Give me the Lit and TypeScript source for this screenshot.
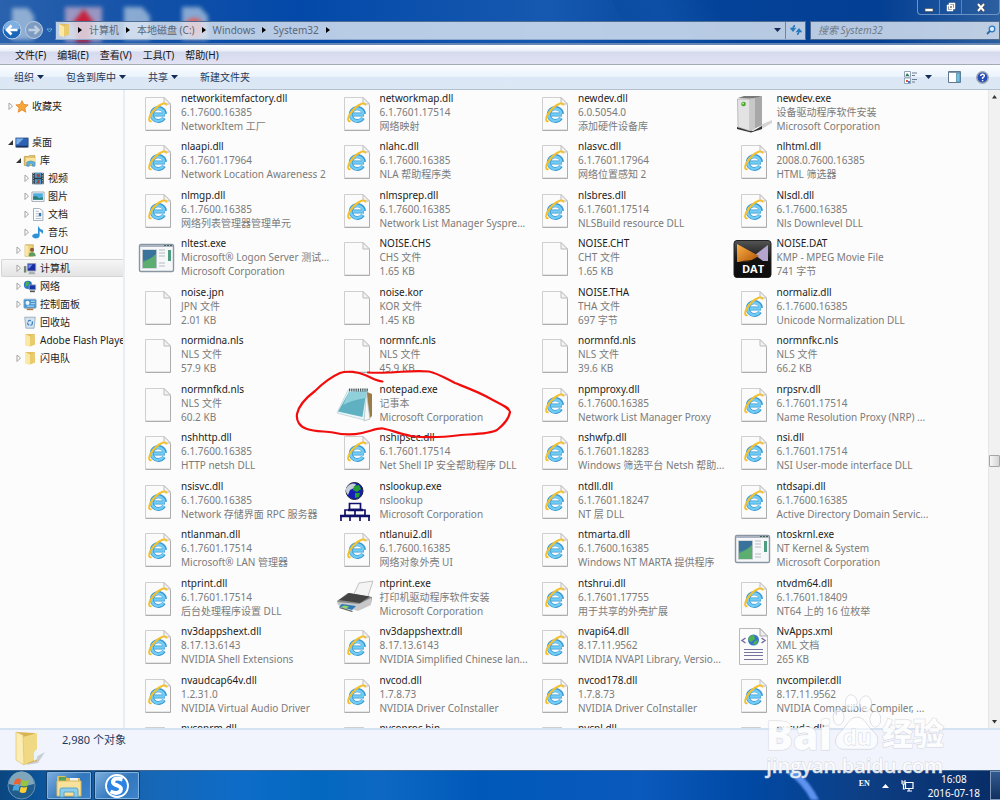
import { LitElement, html, svg, css, nothing } from "lit";
import { customElement, property } from "lit/decorators.js";

const e = (a: string, b: string, c: string, kind = "dll") => ({ a, b, c, kind });
const MS = "Microsoft Corporation";
const R = "6.1.7600.16385";
const S = "6.1.7601.17514";

const FILES = [
  e("networkitemfactory.dll", R, "NetworkItem 工厂"),
  e("networkmap.dll", S, "网络映射"),
  e("newdev.dll", "6.0.5054.0", "添加硬件设备库"),
  e("newdev.exe", "设备驱动程序软件安装", MS, "tower"),
  e("nlaapi.dll", "6.1.7601.17964", "Network Location Awareness 2"),
  e("nlahc.dll", R, "NLA 帮助程序类"),
  e("nlasvc.dll", "6.1.7601.17964", "网络位置感知 2"),
  e("nlhtml.dll", "2008.0.7600.16385", "HTML 筛选器"),
  e("nlmgp.dll", R, "网络列表管理器管理单元"),
  e("nlmsprep.dll", R, "Network List Manager Syspre..."),
  e("nlsbres.dll", S, "NLSBuild resource DLL"),
  e("Nlsdl.dll", R, "Nls Downlevel DLL"),
  e("nltest.exe", "Microsoft® Logon Server 测试...", MS, "app"),
  e("NOISE.CHS", "CHS 文件", "1.65 KB", "page"),
  e("NOISE.CHT", "CHT 文件", "1.65 KB", "page"),
  e("NOISE.DAT", "KMP - MPEG Movie File", "741 字节", "dat"),
  e("noise.jpn", "JPN 文件", "2.01 KB", "page"),
  e("noise.kor", "KOR 文件", "1.45 KB", "page"),
  e("NOISE.THA", "THA 文件", "697 字节", "page"),
  e("normaliz.dll", R, "Unicode Normalization DLL"),
  e("normidna.nls", "NLS 文件", "57.9 KB", "page"),
  e("normnfc.nls", "NLS 文件", "45.9 KB", "page"),
  e("normnfd.nls", "NLS 文件", "39.6 KB", "page"),
  e("normnfkc.nls", "NLS 文件", "66.2 KB", "page"),
  e("normnfkd.nls", "NLS 文件", "60.2 KB", "page"),
  e("notepad.exe", "记事本", MS, "notepad"),
  e("npmproxy.dll", R, "Network List Manager Proxy"),
  e("nrpsrv.dll", S, "Name Resolution Proxy (NRP) ..."),
  e("nshhttp.dll", R, "HTTP netsh DLL"),
  e("nshipsec.dll", S, "Net Shell IP 安全帮助程序 DLL"),
  e("nshwfp.dll", "6.1.7601.18283", "Windows 筛选平台 Netsh 帮助..."),
  e("nsi.dll", S, "NSI User-mode interface DLL"),
  e("nsisvc.dll", R, "Network 存储界面 RPC 服务器"),
  e("nslookup.exe", "nslookup", MS, "lookup"),
  e("ntdll.dll", "6.1.7601.18247", "NT 层 DLL"),
  e("ntdsapi.dll", R, "Active Directory Domain Servic..."),
  e("ntlanman.dll", S, "Microsoft® LAN 管理器"),
  e("ntlanui2.dll", R, "网络对象外壳 UI"),
  e("ntmarta.dll", R, "Windows NT MARTA 提供程序"),
  e("ntoskrnl.exe", "NT Kernel & System", MS, "app"),
  e("ntprint.dll", S, "后台处理程序设置 DLL"),
  e("ntprint.exe", "打印机驱动程序软件安装", MS, "printer"),
  e("ntshrui.dll", "6.1.7601.17755", "用于共享的外壳扩展"),
  e("ntvdm64.dll", "6.1.7601.18409", "NT64 上的 16 位枚举"),
  e("nv3dappshext.dll", "8.17.13.6143", "NVIDIA Shell Extensions"),
  e("nv3dappshextr.dll", "8.17.13.6143", "NVIDIA Simplified Chinese lan..."),
  e("nvapi64.dll", "8.17.11.9562", "NVIDIA NVAPI Library, Versio..."),
  e("NvApps.xml", "XML 文档", "265 KB", "xml"),
  e("nvaudcap64v.dll", "1.2.31.0", "NVIDIA Virtual Audio Driver"),
  e("nvcod.dll", "1.7.8.73", "NVIDIA Driver CoInstaller"),
  e("nvcod178.dll", "1.7.8.73", "NVIDIA Driver CoInstaller"),
  e("nvcompiler.dll", "8.17.11.9562", "NVIDIA Compatible Compiler, ..."),
  e("nvcoprm.dll", "", ""),
  e("nvcoproc.bin", "", "", "page"),
  e("nvcpl.dll", "", ""),
  e("nvcuda.dll", "", ""),
];

const page = svg`
  <path d="M8.500 3.500H27L33.500 10V36H8.500Z" fill="#fbfbfb" stroke="#cfcfcf"/>
  <path d="M8.500 36.500H33.500V11" fill="none" stroke="#adadad"/>
  <path d="M27 3.500V10H33.500Z" fill="#f2f2f2" stroke="#bcbcbc"/>`;

const ART: Record<string, unknown> = {
  page,
  dll: svg`${page}
    <path d="M28 20.500H17M27 24A6.600 6.400 0 1 1 28 20" fill="none" stroke="#3b97d2" stroke-width="4"/>
    <path d="M27.600 20.500H17M26.400 24A6.300 6.200 0 1 1 27.300 20" fill="none" stroke="#72cdf5" stroke-width="2.400"/>
    <path d="M14.500 27C10.500 28.500 11.500 22 17.500 15.500C23 9.500 29.500 7.500 29.500 11.500" fill="none" stroke="#f4c02c" stroke-width="1.900"/>`,
  tower: svg`<path d="M27 31L39 26V29L25 37Z" fill="#d5d5d5"/>
    <path d="M4 33L20 37L29 32V35L18 38.500L4 35Z" fill="#333"/>
    <path d="M5 4L11 2H29L24 5Z" fill="#777"/>
    <path d="M4.500 5H17V37L5 33Z" fill="#e3e3e3" stroke="#999" stroke-width=".6"/>
    <path d="M17 5L29 2V31L17 37Z" fill="#a8a8a8"/>
    <path d="M17 5L22 4V35L17 37Z" fill="#c8c8c8"/>
    <circle cx="10.500" cy="10" r="2.300" fill="#4aa52c"/><circle cx="10" cy="9.500" r=".9" fill="#bff29c"/>`,
  app: svg`<rect x="2.500" y="5.500" width="34" height="27" rx="1.500" fill="#f6f7f9" stroke="#8b96a5" stroke-width="1.400"/>
    <path d="M3 6H36V8H3Z" fill="#aab4c2"/><path d="M27 6.500H35" stroke="#465" stroke-dasharray="2 1"/>
    <rect x="5.500" y="11" width="14" height="18" fill="#438a90" stroke="#b5bfc6"/>
    <path d="M6 29V23Q13 21 19 14V29Z" fill="#5cae70"/><path d="M6 11H19V15Q13 21 6 21Z" fill="#39739b"/>
    <path d="M22 11H28M22 14H28M22 17H28M22 24H28M22 27H28" stroke="#ccd0d4" stroke-width="1.500"/>
    <path d="M31 11H34V22H31Z" fill="#4f9c80"/>`,
  dat: svg`<defs><linearGradient id="k" x1="0" y1="0" x2="0" y2="1"><stop offset="0" stop-color="#555"/><stop offset=".5" stop-color="#161616"/><stop offset="1" stop-color="#000"/></linearGradient>
    <linearGradient id="o" x1="0" y1="0" x2="1" y2="1"><stop offset="0" stop-color="#ffb347"/><stop offset="1" stop-color="#ad5208"/></linearGradient></defs>
    <rect x="1" y="1.500" width="37" height="37" rx="3" fill="url(#k)" stroke="#222"/>
    <path d="M35 6V22H30L22 16Z" fill="#b4a5cc"/><path d="M4 5L26 17L15 23H4Z" fill="url(#o)"/>
    <path d="M1.500 24Q20 18 37.500 24V36Q37.500 38 35.500 38H3.500Q1.500 38 1.500 36Z" fill="#111" opacity=".75"/>
    <text x="20" y="34" text-anchor="middle" font-family="Open Sans" font-weight="700" font-size="11" fill="#fff">DAT</text>`,
  notepad: svg`<path d="M31 7L36 9V31L32 35Z" fill="#9b7a45"/>
    <path d="M30 5L34 34L28 36Z" fill="#f6f6f6" stroke="#aebbc0" stroke-width=".7"/>
    <path d="M12 5L31 4L28 35L1 28Z" fill="#eaf6f9" stroke="#a8c4ca" stroke-width=".6"/>
    <path d="M13 7L30.500 6L26.500 32L2 26.500Z" fill="#5fb1c2"/><path d="M13 7L30.500 6L29.500 13Q16 15 7 20Z" fill="#8fd0da"/>
    <path d="M13 5H32" stroke="#4d5b5e" stroke-width="3" stroke-dasharray="1.200 1"/>`,
  lookup: svg`<circle cx="18.500" cy="9" r="8.500" fill="#1420b4" stroke="#223"/>
    <path d="M11 5Q15 0 20 2L18 6L14 8L12 13Q8 8 11 5Z" fill="#c7d0d8"/>
    <path d="M18 4L23 3L25 7L21 10L17 8Z M19 11L24 11L23 15L19 16Z" fill="#249d32"/>
    <path d="M13.500 21.500H24.500V27.500H13.500ZM9 28H29V33.500H9ZM19 28V33.500M5 34H34M5 33V39M14 33V39M24 33V39M33 33V39" fill="none" stroke="#10106a" stroke-width="1.700"/>
    <path d="M12 28H27M4 34H34" stroke="#10106a" stroke-width="2.400"/>`,
  printer: svg`<path d="M17 17L23 4L37 2L31 20Z" fill="#f4f4f4" stroke="#aaa" stroke-width=".7"/>
    <path d="M1 22L12 14L36 18L35 25L23 31L3 26Z" fill="#888"/>
    <path d="M3 21L13 14L34 17.500L24 24Z" fill="#444"/><path d="M1 23L23 25L35 19V26L22 32L2 26Z" fill="#c8c8c8"/>
    <path d="M6 25L20 27L16 31L3 27.500Z" fill="#2e79b7"/><path d="M8 26.500L13 27.500L10 30L5 28Z" fill="#90d467"/>
    <path d="M4 28L17 32L16 33L3 29Z" fill="#666"/>`,
  xml: svg`<path d="M6.500 1.500H27L34.500 9V37.500H6.500Z" fill="#fbfbfb" stroke="#b9b9b9"/><path d="M27 1.500V9H34.500Z" fill="#eee" stroke="#aaa"/>
    <path d="M12.500 11L9 13.500L12.500 16M28.500 11L32 13.500L28.500 16" fill="none" stroke="#77709c" stroke-width="1.500"/>
    <circle cx="20.500" cy="13" r="5.500" fill="#3575c8"/><path d="M17 9L21 8L22 12L18 15L15 13ZM22 14L25 13L23 18L20 17Z" fill="#4fb24d"/>
    <path d="M11 22.500H30M11 25.500H30M11 28.500H30M11 32.500H30" stroke="#77739f" stroke-width="1.200"/>`,
};

const TREE_ART: Record<string, unknown> = {
  star: svg`<path d="M8 .800L10.200 5.500L15.500 6L11.500 9.700L12.700 15L8 12.200L3.300 15L4.500 9.700L.5 6L5.800 5.500Z" fill="#f6a73c" stroke="#e3862a"/>`,
  desk: svg`<rect x=".5" y="2.500" width="15" height="11" fill="#2d63b4" stroke="#27477d"/><path d="M1 3H10L3 10H1Z" fill="#79aee8"/><path d="M1 13H15" stroke="#1a2f59" stroke-width="2"/>`,
  lib: svg`<path d="M1 3H6L7 2H14V14H1Z" fill="#e5c76b" stroke="#bf9c45"/><path d="M3 5H15V13H3Z" fill="#f8e5a0"/><path d="M4 15V10Q9 7 14 10V15H11V12H7V15Z" fill="#62b3de" stroke="#3b87b7" stroke-width=".7"/>`,
  video: svg`<path d="M1 1H15V15H1Z" fill="#2d3944"/><path d="M4 1H12V7H4ZM4 9H12V15H4Z" fill="#4a9bc9"/><path d="M6 3L10 2L11 6H7Z M7 10H10V14H6Z" fill="#a64938"/><path d="M2.500 1V15M13.500 1V15" stroke="#b9c6ce" stroke-dasharray="1.500 1.500"/>`,
  pic: svg`<path d="M.5 2.500H15.500V14H.5Z" fill="#fff" stroke="#8c99a6"/><path d="M2 4H14V12H2Z" fill="#4eaee0"/><path d="M2 12V8Q6 6 9 10L14 9V12Z" fill="#2c7d74"/>`,
  doc: svg`<path d="M2.500.500H10L14 4V15.500H2.500Z" fill="#fff" stroke="#8a9bab"/><path d="M5 4H9M5 7H9M5 10H12M5 13H12" stroke="#9ab"/><path d="M9 6H12V10H9Z" fill="#3679b6"/>`,
  music: svg`<path d="M8 0Q10 4 14 5Q15.500 8 13 10Q13 7 10 6.500V12.500Q9 15.500 5 15.500Q0 14.500 1 11.500Q3 8.500 8 9.500Z" fill="#2e91d8"/>`,
  user: svg`<path d="M2 1H12V15H2Z" fill="#edd27a" stroke="#c9a854"/><path d="M2 1L6 3V16L2 14Z" fill="#f8e8a8"/><circle cx="10.500" cy="7" r="2.500" fill="#8b5a3b"/><path d="M6.500 15Q6 10 10.500 10Q15 10 15 15Z" fill="#5f9c64"/>`,
  pc: svg`<path d="M5 2H15V11H5Z" fill="#1a2ea3" stroke="#8c96a2"/><path d="M6 3H11L7 8H6Z" fill="#708dea"/><path d="M7 12H13L15 15H6Z" fill="#a8b0b7"/><path d="M.5 5H3.500V13H.5Z" fill="#738577"/>`,
  net: svg`<circle cx="5.500" cy="6" r="5" fill="#2676c8"/><path d="M3 2L7 2L6 6L2 9Z" fill="#4db04e"/><path d="M7 6H15V12H7Z" fill="#1835a5" stroke="#9eabb8"/><path d="M8 14H14" stroke="#555" stroke-width="2"/>`,
  panel: svg`<rect x=".5" y="1.500" width="15" height="11" rx="1" fill="#4794cf" stroke="#89adc8"/><circle cx="5" cy="6" r="2.500" fill="#e8f3fa"/><path d="M9 4H14M9 7H14M4 10H13" stroke="#d9effb"/><path d="M4 14H12" stroke="#b5793d" stroke-width="2"/>`,
  bin: svg`<path d="M1.500 1.500H14.500L13 15H3Z" fill="#d6e4ef" stroke="#8ea5b8"/><circle cx="8" cy="8.500" r="3" fill="none" stroke="#4384c5" stroke-width="1.600" stroke-dasharray="4 1.500"/>`,
  folder: svg`<path d="M2 0H13L14 13L8 15Z" fill="#e3bf5e"/><path d="M2 0L8 3V16L2 14Z" fill="#f9e9a4"/><path d="M8 3L13 0H14V13L8 15Z" fill="#e9ca6c"/>`,
};

const TREE: [number, string, string, string][] = [
  [0, "closed", "star", "收藏夹"],
  [0, "", "", ""],
  [0, "open", "desk", "桌面"],
  [1, "open", "lib", "库"],
  [2, "closed", "video", "视频"],
  [2, "closed", "pic", "图片"],
  [2, "closed", "doc", "文档"],
  [2, "closed", "music", "音乐"],
  [1, "closed", "user", "ZHOU"],
  [1, "closed", "pc", "计算机"],
  [1, "closed", "net", "网络"],
  [1, "closed", "panel", "控制面板"],
  [1, "", "bin", "回收站"],
  [1, "", "folder", "Adobe Flash Player"],
  [1, "closed", "folder", "闪电队"],
];

const base = css`
  * { box-sizing: border-box; }
  button, input, a { font: inherit; color: inherit; margin: 0; padding: 0; border: 0; background: none; text-decoration: none; outline: none; white-space: nowrap; }
  svg { display: block; flex: none; }
`;

@customElement("file-tile")
class FileTile extends LitElement {
  @property({ attribute: false }) file = FILES[0];
  static styles = [base, css`
    :host { display: block; position: relative; min-width: 0; }
    .tile { display: flex; gap: 4px; padding-left: 3px; }
    .art { margin-top: 3px; }
    .text { min-width: 0; line-height: 14px; color: #7b7b7b; white-space: nowrap; }
    .name { color: #1c1c1c; }
    .loop { position: absolute; left: -38px; top: -13px; pointer-events: none; z-index: 2; }
  `];
  render() {
    const f = this.file;
    return html`<div class="tile">
      <svg class="art" width="40" height="40" viewBox="0 0 40 40">${ART[f.kind]}</svg>
      <div class="text"><div class="name">${f.a}</div><div>${f.b}</div><div>${f.c}</div></div>
    </div>
    ${f.kind === "notepad" ? html`<svg class="loop" width="218" height="70" viewBox="0 0 218 70">
      <path d="M87.500 12.500C82 12.500 77 9 70 6C63 3 52 1.500 45 4C36 8 28 14 20 22C12 28 4 35 2 45C1 52 5 58 12 60C20 63 30 62 38 63.500C48 66 58 66 67 64C76 62 82 59 88 59.500C96 61 105 65 116 67C130 69 150 68 166 66C180 65 195 65 202 61C207 57 214 50 215 43C214 38 205 35 196 30C184 23 170 18 160 14C150 9 142 4 134 2.500C120 1 108 3 94 3.500Q82 4 73 3.500" fill="none" stroke="#f20d0d" stroke-width="2.200" stroke-linecap="round"/>
    </svg>` : nothing}`;
  }
}

@customElement("nav-tree")
class NavTree extends LitElement {
  static styles = [base, css`
    :host { display: block; padding-top: 7px; overflow: hidden; }
    .row { display: flex; align-items: center; height: 18px; color: #1c1c1c; border: 1px solid transparent; border-right: 0; margin-left: 1px; padding-left: 5px; border-radius: 2px 0 0 2px; }
    .l1 { padding-left: 13px; }
    .l2 { padding-left: 21px; }
    .on { background: linear-gradient(#f6f6f6, #e4e4e4); border-color: #d6d6d6; }
    .icon { margin: 0 3px 0 0; }
  `];
  render() {
    return html`${TREE.map(([level, state, art, label]) => label ? html`
      <a href="#" class="row l${level} ${label === "计算机" ? "on" : ""}">
        <svg width="8" height="10" viewBox="0 0 8 10">${state === "closed"
          ? svg`<path d="M2 2L5.500 5L2 8.500Z" fill="#fff" stroke="#a2a2a2"/>`
          : state === "open" ? svg`<path d="M1 8H6V3Z" fill="#333"/>` : nothing}</svg>
        <svg class="icon" width="14" height="13" viewBox="0 0 16 16">${TREE_ART[art]}</svg>
        <span>${label}</span>
      </a>` : html`<div class="row"></div>`)}`;
  }
}

@customElement("app-root")
class AppRoot extends LitElement {
  static styles = [base, css`
    :host { display: flex; flex-direction: column; height: 100vh; overflow: hidden; position: relative; font: 10px/14px "Noto Sans", "Noto Sans CJK SC", sans-serif; background: #fcfcfc; }
    .glass { display: flex; flex-direction: column; height: 45px; flex: none; border-bottom: 2px solid #6786b3;
      background: linear-gradient(62deg, transparent 62%, #0b4da3 62%, #0d4fa6 66%, transparent 72%), linear-gradient(90deg, #2a62ad 0, #1150a8 16%, #0349a9 30%, #1659b0 55%, #04439a 70%, #033f93 88%, #2c5f9f 100%); position: relative; }
    .blurs { position: absolute; left: 0; top: 4px; filter: blur(2px); }
    .wins { display: flex; align-self: flex-end; height: 15px; flex: none; border: 1px solid #6f93c3; border-top: 0; border-radius: 0 0 4px 4px; position: relative; }
    .wins button { width: 22px; display: grid; place-items: center; border-right: 1px solid #5d83b8; }
    .wins button:last-child { width: 37px; border: 0; }
    .bar { display: flex; align-items: center; height: 20px; margin-top: 5px; position: relative; }
    .hist { display: flex; align-items: center; width: 55px; padding-left: 2px; gap: 2px; flex: none; }
    .addr { display: flex; align-items: center; flex: 1; height: 19px; background: rgba(220,230,242,.83); border: 1px solid #4f6c93; border-bottom-color: #8ea9cb; color: #5b6675; padding-left: 1px; }
    .crumb { display: flex; align-items: center; }
    .crumb svg { margin: 0 7px; }
    .grow { flex: 1; }
    .drop { width: 16px; display: grid; place-items: center; align-self: stretch; }
    .fresh { width: 20px; display: grid; place-items: center; align-self: stretch; border-left: 1px solid #6c84a6; }
    .find { display: flex; align-items: center; width: 190px; height: 19px; margin-left: 4px; background: rgba(220,230,242,.83); border: 1px solid #4f6c93; padding: 0 3px 0 7px; }
    .find input { flex: 1; min-width: 0; font-style: italic; }
    .find input::placeholder { color: #717b88; opacity: 1; }
    .menu { display: flex; align-items: center; gap: 11px; height: 20px; flex: none; padding-left: 15px; color: #151515; background: linear-gradient(#fff, #eceff8 32%, #d5daed 36%, #e1e2f3); border-bottom: 1px solid #a3a9b5; }
    .tools { display: flex; align-items: center; height: 25px; flex: none; padding: 0 11px 0 14px; color: #1e395b; background: linear-gradient(#fbfdff, #eaf3fc 48%, #dbe7f4 52%, #dde8f5); border-bottom: 1px solid #b2bfd1; }
    .tools button { display: flex; align-items: center; gap: 3px; margin-right: 22px; }
    .tools .view { margin-right: 16px; gap: 8px; }
    .tools .pane { margin-right: 15px; }
    .tools .help { margin-right: 0; }
    .main { display: flex; flex: 1; min-height: 0; }
    .side { width: 125px; flex: none; border-right: 2px solid #e6eef8; }
    .list { flex: 1; min-width: 0; overflow: hidden; display: grid; grid-template-columns: repeat(4, minmax(0, 1fr)); grid-auto-rows: 48px 49px; padding: 1px 60px 0 9px; }
    .scroll { width: 12px; flex: none; display: flex; flex-direction: column; align-items: center; background: #f1f1f1; border-left: 1px solid #e6e6e6; padding: 5px 0 4px; }
    .above { flex: 59; }
    .below { flex: 42; }
    .thumb { width: 11px; height: 12px; flex: none; border: 1px solid #a5a5a5; border-radius: 1px; background: linear-gradient(90deg, #f6f6f6, #d4d4d4); }
    .info { display: flex; height: 42px; flex: none; background: #f1f4fc; border-top: 2px solid #d5e2f1; color: #1e395b; padding: 0 0 0 14px; gap: 16px; }
    .count { padding-top: 2px; line-height: 16px; font-size: 11px; }
    .task { display: flex; height: 30px; flex: none; border-top: 1px solid #44678e; background: linear-gradient(90deg, #0a4680 0, #0b5499 4%, #1767b6 15%, #0d6cc8 24%, #0368c0 32%, #0d68c4 38%, #0059b8 48%, #0a59bc 64%, #0049a4 75%, #0d3f85 86%, #082c66 100%); color: #fff; position: relative; }
    .arc { position: absolute; left: 77%; top: 0; filter: blur(1px); }
    .start { width: 46px; display: grid; place-items: center; padding-right: 4px; }
    .app { width: 46px; margin-right: 2px; display: grid; place-items: center; border: 1px solid #123e6c; box-shadow: inset 0 0 0 1px #7eb3e4; background: linear-gradient(135deg, #7fb0de, #3377bd 55%, #3d85cb); border-radius: 2px; }
    .tray { display: flex; align-items: center; position: relative; }
    .lang { font: 700 8px/10px "Liberation Serif", serif; margin: 0 12px 4px 0; }
    .up { margin-right: 12px; }
    .clock { text-align: center; margin: 0 10px 0 14px; }
    .peek { width: 10px; align-self: stretch; border: 1px solid #7f97b9; border-right: 0; background: linear-gradient(#335a90, #10305f); }
    .mark { position: absolute; right: 56px; bottom: 22px; color: rgba(255,255,255,.85); -webkit-text-stroke: 1px rgba(190,194,202,.6); paint-order: stroke fill; display: flex; flex-direction: column; align-items: center; pointer-events: none; font-family: "Open Sans", "Noto Sans CJK SC", sans-serif; font-weight: 700; }
    .brand { display: flex; align-items: flex-end; font-size: 41px; line-height: 40px; font-weight: 800; }
    .paw { position: relative; width: 50px; height: 60px; }
    .du { position: absolute; left: 11px; bottom: 6px; font-size: 22px; line-height: 24px; font-weight: 700; }
    .cn { font-size: 31px; line-height: 42px; }
    .site { font-size: 20px; line-height: 24px; font-weight: 600; }
  `];
  render() {
    const right = html`<svg width="4" height="8" viewBox="0 0 4 8"><path d="M0 1L4 4L0 7Z" fill="#000"/></svg>`;
    const down = html`<svg width="7" height="4" viewBox="0 0 7 4"><path d="M0 0H7L3.500 4Z" fill="#142c55"/></svg>`;
    return html`
      <header class="glass">
        <svg class="blurs" width="220" height="38" viewBox="0 0 220 38"><path d="M12 4H28L34 12V36H12ZM124 3H142L150 12V36H124ZM182 3H200L208 12V36H182Z" fill="#c8d9e8" opacity=".65"/><path d="M65 3H102V38H65Z" fill="#b9a6c8" opacity=".8"/><path d="M84 5L96 22H90V38H76V22H70Z" fill="#c8203a"/><circle cx="194" cy="24" r="10" fill="#e55c58"/></svg>
        <div class="wins">
          <button aria-label="最小化"><svg width="10" height="9" viewBox="0 0 10 9"><path d="M1 5.500H9V8.500H1Z" fill="#fff" stroke="#555" stroke-width=".7"/></svg></button>
          <button aria-label="还原"><svg width="10" height="10" viewBox="0 0 10 10"><path d="M3.500 1.500H8.500V6.500H3.500ZM1.500 3.500H6.500V8.500H1.500Z" fill="#555" stroke="#fff" stroke-width="1.400"/></svg></button>
          <button aria-label="关闭"><svg width="10" height="9" viewBox="0 0 10 9"><path d="M2 1L8 8M8 1L2 8" stroke="#444" stroke-width="3.200"/><path d="M2 1L8 8M8 1L2 8" stroke="#fff" stroke-width="2"/></svg></button>
        </div>
        <div class="bar">
          <div class="hist">
            <button aria-label="后退"><svg width="20" height="20" viewBox="0 0 20 20"><circle cx="10" cy="10" r="9" fill="#1c66ba" stroke="#c4d9ee"/><path d="M2 9A8 8 0 0 1 18 9Q10 11 2 9Z" fill="#7db0e1"/><path d="M15.500 10H6M9.500 5.500L5 10L9.500 14.500" fill="none" stroke="#fff" stroke-width="2.600"/></svg></button>
            <button aria-label="前进"><svg width="20" height="20" viewBox="0 0 20 20"><circle cx="10" cy="10" r="8.500" fill="#7e9cc2" stroke="#b9cce2"/><path d="M4.500 10H14M10.500 6L14.500 10L10.500 14" fill="none" stroke="#c0d0e2" stroke-width="2.400"/></svg></button>
            <svg width="7" height="5" viewBox="0 0 7 5"><path d="M1 1H6L3.500 4Z" fill="#1c4d92" stroke="#6fc1ef" stroke-width=".8"/></svg>
          </div>
          <nav class="addr">
            <svg width="14" height="13" viewBox="0 0 16 16">${TREE_ART.folder}</svg>
            ${["计算机", "本地磁盘 (C:)", "Windows", "System32"].map((t) => html`<span class="crumb">${right}<a href="#">${t}</a></span>`)}
            <span class="crumb">${right}</span>
            <span class="grow"></span>
            <button class="drop" aria-label="历史">${down}</button>
            <button class="fresh" aria-label="刷新"><svg width="12" height="12" viewBox="0 0 12 12"><path d="M5 1.500Q3 2 3 5M1 4.500H5L3 7ZM7 10.500Q9 10 9 7M7 7.500H11L9 5Z" fill="#2979bd" stroke="#2979bd" stroke-width="1.300"/></svg></button>
          </nav>
          <label class="find"><input type="search" aria-label="搜索" placeholder="搜索 System32"><svg width="10" height="10" viewBox="0 0 10 10"><circle cx="6" cy="4" r="2.800" fill="#dcecf8" stroke="#2c79c0" stroke-width="1.300"/><path d="M4 6L1 9" stroke="#2c66a8" stroke-width="1.800"/></svg></label>
        </div>
      </header>
      <nav class="menu">${["文件(F)", "编辑(E)", "查看(V)", "工具(T)", "帮助(H)"].map((t) => html`<button>${t}</button>`)}</nav>
      <div class="tools">
        <button>组织 ${down}</button><button>包含到库中 ${down}</button><button>共享 ${down}</button><button>新建文件夹</button>
        <span class="grow"></span>
        <button class="view" aria-label="更改视图"><svg width="13" height="13" viewBox="0 0 13 13"><path d="M.5.500H6.500V6H.5ZM.5 7H6.500V12.500H.5Z" fill="#fff" stroke="#92a3b4"/><path d="M1.500 5L3 2L5.500 5Z" fill="#287a58"/><path d="M2 9H4V11H2Z" fill="#e35133"/><path d="M4 10H6V12H4Z" fill="#3e78d2"/><path d="M8 2H13M8 4.500H11M8 8.500H13M8 11H11" stroke="#6c7d90"/></svg>${down}</button>
        <button class="pane" aria-label="预览窗格"><svg width="13" height="12" viewBox="0 0 13 12"><path d="M.5.500H12.500V11.500H.5Z" fill="#fff" stroke="#61788f"/><path d="M1 1.500H12" stroke="#8698aa"/><path d="M8.500 2H12V11H8.500Z" fill="#73bfdc" stroke="#518ead" stroke-width=".8"/></svg></button>
        <button class="help" aria-label="帮助"><svg width="13" height="13" viewBox="0 0 13 13"><circle cx="6.500" cy="6.500" r="5.700" fill="#274db8" stroke="#9fa7b4" stroke-width="1.500"/><path d="M4.700 5Q4.700 3.200 6.500 3.200Q8.500 3.200 8.300 5Q8.200 6 6.600 6.700V8M6.600 9V10.300" fill="none" stroke="#fff" stroke-width="1.400"/></svg></button>
      </div>
      <main class="main">
        <nav-tree class="side"></nav-tree>
        <section class="list">${FILES.map((f) => html`<file-tile .file=${f}></file-tile>`)}</section>
        <div class="scroll">
          <svg width="5" height="4" viewBox="0 0 5 4"><path d="M0 3.500L2.500 0L5 3.500Z" fill="#333"/></svg>
          <span class="above"></span><span class="thumb"></span><span class="below"></span>
          <svg width="5" height="4" viewBox="0 0 5 4"><path d="M0 0L2.500 3.500L5 0Z" fill="#333"/></svg>
        </div>
      </main>
      <footer class="info">
        <svg width="32" height="38" viewBox="0 0 32 38"><path d="M20 28L31 22L24 33L12 35Z" fill="#c9cdd8"/><path d="M2 2L20 3L23 5V31L9 35Z" fill="#d9b34d"/><path d="M9 7L23 3V29L9 35Z" fill="#f0d985"/><path d="M2 2L9 5L10 35L2 30Z" fill="#fbedb3" stroke="#d9bd68" stroke-width=".6"/><path d="M20 22L23 19V29L20 31Z" fill="#e9f4fa"/></svg>
        <span class="count">2,980 个对象</span>
      </footer>
      <footer class="task">
        <svg class="arc" width="50" height="29" viewBox="0 0 50 29"><path d="M18 -2Q36 10 46 31" fill="none" stroke="#5f93f0" stroke-width="7"/></svg>
        <button class="start" aria-label="开始"><svg width="29" height="29" viewBox="0 0 29 29"><circle cx="14.500" cy="14.500" r="13.500" fill="#205c8c" stroke="#6593b6"/><path d="M2 13A12.500 12.500 0 0 1 27 13Q14 17 2 13Z" fill="#80a6bc"/><path d="M8 9Q11 6.500 14 8.500L13 14Q10 12 6.500 14Z" fill="#ed6330"/><path d="M15 9Q18 11 22 9L20.500 14.500Q17 16.500 14 14.500Z" fill="#96c63d"/><path d="M6.500 15Q10 13 12.800 15L11.500 20Q8.500 18.500 5.500 20Z" fill="#49a5e0"/><path d="M13.800 15.500Q17 17.500 20.300 15.500L19 21Q16 23 12.500 21Z" fill="#fccf32"/></svg></button>
        <button class="app" aria-label="资源管理器"><svg width="26" height="24" viewBox="0 0 26 24"><path d="M1 3Q1 2 3 2H9L11 4H24V21H1Z" fill="#e2bd57"/><path d="M3 3H10V7H3Z" fill="#51a55b"/><path d="M14 4H22V7H14Z" fill="#eef5fa"/><path d="M1 7H25V22H1Z" fill="#f8e19a" stroke="#dcb95d"/><path d="M4 23V16Q4 14 6 14H20Q22 14 22 16V23H18V18H8V23Z" fill="#8bcdea" stroke="#5aa4cc"/></svg></button>
        <button class="app" aria-label="浏览器"><svg width="26" height="26" viewBox="0 0 26 26"><circle cx="13" cy="13" r="11" fill="#2c83e2" stroke="#fff" stroke-width="1.800"/><path d="M18.500 6.500Q10 4 9 8.500Q8.500 11 13.500 12.500Q18.500 14.500 16.500 18Q14 21.500 6.500 18.500" fill="none" stroke="#fff" stroke-width="4"/></svg></button>
        <span class="grow"></span>
        <div class="tray">
          <span class="lang">EN</span>
          <svg class="up" width="7" height="4" viewBox="0 0 7 4"><path d="M0 4L3.500 0L7 4Z" fill="#fff"/></svg>
          <svg width="13" height="13" viewBox="0 0 13 13"><path d="M4.500 3.500H12V9.500H4.500ZM6 12H11M8 10V12M2.500 5V10H4" fill="none" stroke="#fff" stroke-width="1.200"/><path d="M1 1V3H4V1M1 3V5H4V3" fill="none" stroke="#fff"/></svg>
          <time class="clock">16:08<br>2016-07-18</time>
          <span class="peek"></span>
        </div>
      </footer>
      <div class="mark">
        <div class="brand"><span>Bai</span><span class="paw"><svg width="50" height="60" viewBox="0 0 50 62"><g fill="rgba(255,255,255,.6)" stroke="rgba(185,190,200,.7)"><ellipse cx="6" cy="24" rx="5.500" ry="8"/><ellipse cx="19" cy="9" rx="6" ry="8"/><ellipse cx="34" cy="10" rx="6" ry="8"/><ellipse cx="44" cy="26" rx="5.500" ry="8"/><path d="M25 24C33 24 35 33 42 39C50 46 46 57 38 57H12C2 57 0 46 8 39C15 33 17 24 25 24Z"/></g></svg><span class="du">du</span></span><span class="cn">经验</span></div>
        <div class="site">jingyan.baidu.com</div>
      </div>`;
  }
}
